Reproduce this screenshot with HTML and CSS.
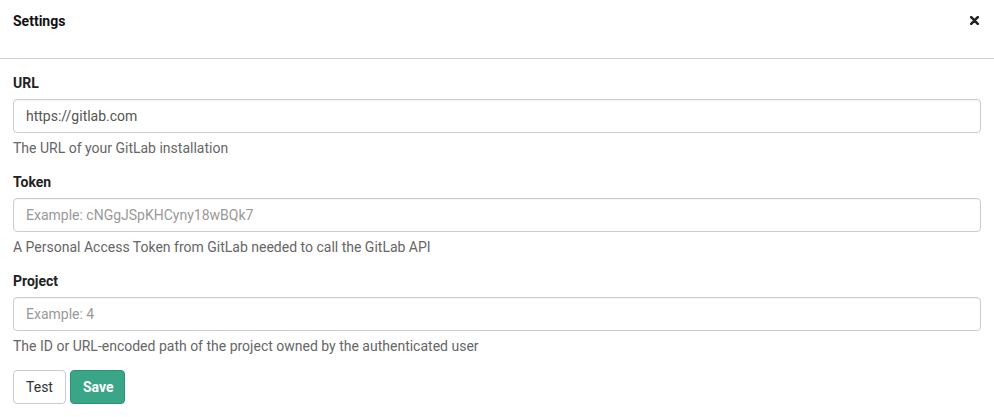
FILE: index.html
```html
<!DOCTYPE html>
<html lang="en">
<head>
<meta charset="utf-8">
<title>Settings</title>
<link rel="stylesheet" href="styles.css">
</head>
<body>
<div class="modal">
  <div class="modal-header">
    <h4 class="modal-title">Settings</h4>
    <button class="close" type="button" aria-label="Close">
      <svg width="9" height="9" viewBox="0 0 9 9"><path d="M1.2 1.2 L7.8 7.8 M7.8 1.2 L1.2 7.8" stroke="#222" stroke-width="2.6" stroke-linecap="round"/></svg>
    </button>
  </div>
  <form class="modal-body">
    <div class="form-group">
      <label class="label">URL</label>
      <input class="input" type="text" value="https://gitlab.com">
      <p class="help">The URL of your GitLab installation</p>
    </div>
    <div class="form-group">
      <label class="label">Token</label>
      <input class="input" type="text" placeholder="Example: cNGgJSpKHCyny18wBQk7">
      <p class="help">A Personal Access Token from GitLab needed to call the GitLab API</p>
    </div>
    <div class="form-group">
      <label class="label">Project</label>
      <input class="input" type="text" placeholder="Example: 4">
      <p class="help">The ID or URL-encoded path of the project owned by the authenticated user</p>
    </div>
    <div class="actions">
      <button class="btn btn-default" type="button">Test</button>
      <button class="btn btn-primary" type="button">Save</button>
    </div>
  </form>
</div>
</body>
</html>
```
FILE: styles.css
```css
* { box-sizing: border-box; }
html, body {
  margin: 0;
  padding: 0;
  background: #fff;
}
body {
  font-family: Roboto, "Liberation Sans", Arial, sans-serif;
  font-size: 14px;
  line-height: 20px;
  color: #333;
}
.modal {
  width: 994px;
}
.modal-header {
  display: flex;
  justify-content: space-between;
  align-items: flex-start;
  padding: 11px 15px 0 13px;
  height: 59px;
  border-bottom: 1px solid #d2d2d6;
}
.modal-title {
  margin: 0;
  font-size: 14px;
  line-height: 20px;
  font-weight: 700;
  color: #111;
}
.close {
  border: 0;
  background: none;
  padding: 0;
  margin-top: 5px;
  width: 9px;
  height: 9px;
  display: flex;
  cursor: pointer;
}
.modal-body {
  padding: 14px 13px 0 13px;
  margin: 0;
}
.form-group {
  display: flex;
  flex-direction: column;
  margin-bottom: 14px;
}
.label {
  font-weight: 700;
  color: #222;
  line-height: 20px;
  margin-bottom: 6px;
}
.input {
  width: 968px;
  height: 34px;
  padding: 6px 12px;
  border: 1px solid #ccc;
  border-radius: 4px;
  font-family: inherit;
  font-size: 14px;
  color: #555;
  background: #fff;
  box-shadow: inset 0 1px 1px rgba(0,0,0,0.04);
}
.input::placeholder {
  color: #999;
}
.help {
  margin: 5px 0 0 0;
  color: #666;
  line-height: 20px;
}
.actions {
  display: flex;
  gap: 4px;
}
.btn {
  height: 34px;
  padding: 6px 12px;
  border-radius: 4px;
  font-family: inherit;
  font-size: 14px;
  line-height: 20px;
  cursor: pointer;
}
.btn-default {
  background: #fff;
  border: 1px solid #ccc;
  color: #333;
  width: 53px;
}
.btn-primary {
  background: #3aa688;
  border: 1px solid #2f9174;
  color: #fff;
  font-weight: 700;
  width: 55px;
}
```
